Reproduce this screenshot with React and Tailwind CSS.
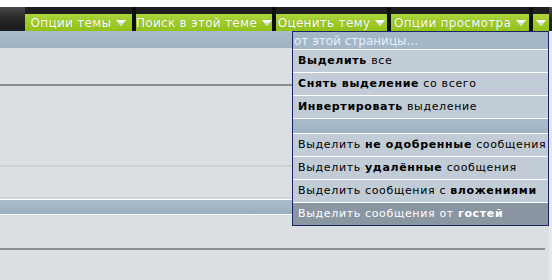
import React from "react";

const Arrow = () => (
  <svg width="10" height="6" viewBox="0 0 10 6" className="ml-[5px] shrink-0">
    <path d="M0 0 H10 L5 6 Z" fill="#ffffff" />
    <path d="M2 2.4 H8 L5 6 Z" fill="#d6dbe0" />
  </svg>
);

const Btn = ({ label, w }) => (
  <div
    className={`h-[17px] flex items-center justify-center bg-gradient-to-b from-[#acd43a] to-[#92c214] text-white text-[12px] tracking-[0.3px] leading-none whitespace-nowrap ${w}`}
  >
    {label && <span className="[text-shadow:0_0_1px_#6f9a10]">{label}</span>}
    <Arrow />
  </div>
);

const Row = ({ children, dark }) => (
  <div
    className={`h-[23px] flex items-center pl-[5px] border-t border-white whitespace-nowrap ${
      dark ? "bg-[#8a96a2] text-white" : "bg-[#c2ccd6] text-black"
    }`}
  >
    {children}
  </div>
);

export default function App() {
  return (
    <div className="relative w-[552px] h-[280px] overflow-hidden bg-white font-['DejaVu_Sans',Verdana,sans-serif]">
      <div className="h-[7px] bg-white" />
      <div className="h-[24px] bg-gradient-to-b from-[#4a4a4a] via-[#262626] to-[#1a1a1a] flex items-end pl-[25px]">
        <div className="flex items-end h-full bg-[#0e0e0e] gap-[4px]">
          <div className="h-full flex items-end bg-[#1e1e1e]"><Btn label="Опции темы" w="w-[107px]" /></div>
          <div className="h-full flex items-end bg-[#1e1e1e]"><Btn label="Поиск в этой теме" w="w-[136px]" /></div>
          <div className="h-full flex items-end bg-[#1e1e1e]"><Btn label="Оценить тему" w="w-[111px]" /></div>
          <div className="h-full flex items-end bg-[#1e1e1e]"><Btn label="Опции просмотра" w="w-[138px]" /></div>
          <div className="h-full flex items-end bg-[#1e1e1e]"><Btn label="" w="w-[16px] pr-[5px]" /></div>
        </div>
      </div>
      <div className="flex">
        <div className="w-[549px]">
          <div className="h-[17px] bg-gradient-to-b from-[#a9bccb] to-[#9fb3c3]" />
          <div className="h-[36px] bg-[#dcdfe2]" />
          <div className="h-[2px] bg-[#8c8c8c]" />
          <div className="h-[79px] bg-[#dcdfe2]" />
          <div className="h-[2px] bg-[#cdd1d5]" />
          <div className="h-[30px] bg-[#dcdfe2]" />
          <div className="h-[2px] bg-[#d2d4d6]" />
          <div className="h-[1px] bg-white" />
          <div className="h-[14px] bg-gradient-to-b from-[#a9bccb] to-[#9bb0c0]" />
          <div className="h-[1px] bg-white" />
          <div className="h-[33px] bg-[#dcdfe2]" />
          <div className="flex">
            <div className="w-[545px] h-[2px] bg-[#8c8c8c]" />
            <div className="flex-1 bg-[#dcdfe2]" />
          </div>
          <div className="h-[40px] bg-[#dcdfe2]" />
        </div>
        <div className="flex-1 bg-[#e6e9ec]" />
      </div>

      <div className="absolute left-[292px] top-[31px] w-[257px] border border-[#1a2466] text-[11px] tracking-[0.65px]">
        <div className="h-[17px] flex items-center pl-[1px] bg-[#a3b7c8] text-[#e6eef7] text-[12px] tracking-normal whitespace-nowrap">
          от этой страницы...
        </div>
        <Row><b>Выделить</b>&nbsp;все</Row>
        <Row><b>Снять выделение</b>&nbsp;со всего</Row>
        <Row><b>Инвертировать</b>&nbsp;выделение</Row>
        <div className="h-[15px] border-t border-white bg-gradient-to-b from-[#a9bccb] to-[#9fb3c3]" />
        <Row>Выделить&nbsp;<b>не одобренные</b>&nbsp;сообщения</Row>
        <Row>Выделить&nbsp;<b>удалённые</b>&nbsp;сообщения</Row>
        <Row>Выделить сообщения с&nbsp;<b>вложениями</b></Row>
        <Row dark>Выделить сообщения от&nbsp;<b>гостей</b></Row>
      </div>
    </div>
  );
}
